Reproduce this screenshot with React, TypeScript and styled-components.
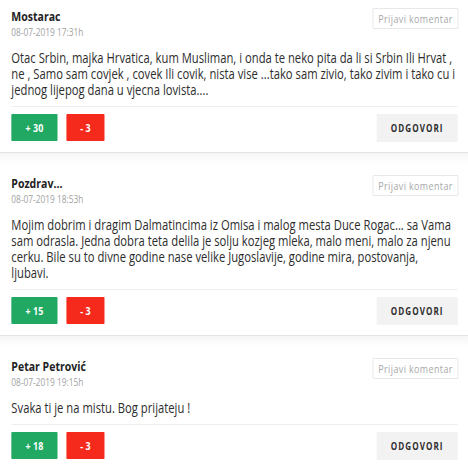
import React from 'react';
import styled, { createGlobalStyle } from 'styled-components';

const GlobalStyle = createGlobalStyle`
	html, body {
		margin: 0;
		padding: 0;
		background: #fff;
		overflow: hidden;
	}
	body {
		font-family: 'Open Sans', 'Liberation Sans', sans-serif;
	}
`

// the capture is narrower than the page it comes from: squeeze the whole list horizontally
const List = styled.div`
	width: 578px;
	margin-top: -15px;
	transform: scaleX(0.81);
	transform-origin: 0 0;
`

const Card = styled.div`
	padding: 21px 13px 10px 14px;
	border-top: 1px solid #e3e3e3;
	background: linear-gradient(#f6f6f6, #fff 11px);
`

const Header = styled.div`
	display: flex;
	justify-content: space-between;
	align-items: flex-start;
`

const Author = styled.div`
	font-size: 13px;
	font-weight: 700;
	line-height: 18px;
	color: #222;
`

const Date = styled.div`
	margin-top: 1px;
	font-size: 10.3px;
	line-height: 12px;
	color: #a3a3a3;
`

const ReportButton = styled.button`
	height: 21px;
	padding: 0 6px;
	margin: 1px -1px 0 0;
	font-family: inherit;
	font-size: 11px;
	letter-spacing: 0.5px;
	color: #a8a8a8;
	background: #fff;
	border: 1px solid #e6e6e6;
	border-radius: 1px;
`

const Text = styled.p`
	margin: 12px 0 0;
	padding-bottom: 8px;
	border-bottom: 1px solid #efefef;
	font-size: 13.9px;
	line-height: 16px;
	color: #2d2d2d;
`

const Actions = styled.div`
	display: flex;
	align-items: flex-start;
	gap: 11px;
	margin-top: 7px;
`

const Vote = styled.button<{ $up?: boolean }>`
	height: 27px;
	width: ${p => (p.$up ? '57px' : '47px')};
	border: none;
	border-radius: 1px;
	font-family: inherit;
	font-size: 11px;
	font-weight: 700;
	color: #fff;
	background: ${p => (p.$up ? '#21a862' : '#f5291c')};
`

const Reply = styled.button`
	margin-left: auto;
	height: 28px;
	width: 100px;
	border: none;
	font-family: inherit;
	font-size: 10px;
	font-weight: 700;
	letter-spacing: 1.3px;
	color: #2d2d2d;
	background: #f2f2f2;
`

type Comment = {
	author: string;
	date: string;
	text: string;
	up: number;
	down: number;
}

const comments: Comment[] = [
	{
		author: 'Mostarac',
		date: '08-07-2019 17:31h',
		text: 'Otac Srbin, majka Hrvatica, kum Musliman, i onda te neko pita da li si Srbin Ili Hrvat , ne , Samo sam covjek , covek Ili covik, nista vise ...tako sam zivio, tako zivim i tako cu i jednog lijepog dana u vjecna lovista....',
		up: 30,
		down: 3,
	},
	{
		author: 'Pozdrav...',
		date: '08-07-2019 18:53h',
		text: 'Mojim dobrim i dragim Dalmatincima iz Omisa i malog mesta Duce Rogac... sa Vama sam odrasla. Jedna dobra teta delila je solju kozjeg mleka, malo meni, malo za njenu cerku. Bile su to divne godine nase velike Jugoslavije, godine mira, postovanja, ljubavi.',
		up: 15,
		down: 3,
	},
	{
		author: 'Petar Petrović',
		date: '08-07-2019 19:15h',
		text: 'Svaka ti je na mistu. Bog prijateju !',
		up: 18,
		down: 3,
	},
]

export default function App() {
	return (
		<>
			<GlobalStyle />
			<List>
				{comments.map(c => (
					<Card key={c.date}>
						<Header>
							<div>
								<Author>{c.author}</Author>
								<Date>{c.date}</Date>
							</div>
							<ReportButton type="button">Prijavi komentar</ReportButton>
						</Header>
						<Text>{c.text}</Text>
						<Actions>
							<Vote $up type="button">+ {c.up}</Vote>
							<Vote type="button">- {c.down}</Vote>
							<Reply type="button">ODGOVORI</Reply>
						</Actions>
					</Card>
				))}
			</List>
		</>
	)
}
